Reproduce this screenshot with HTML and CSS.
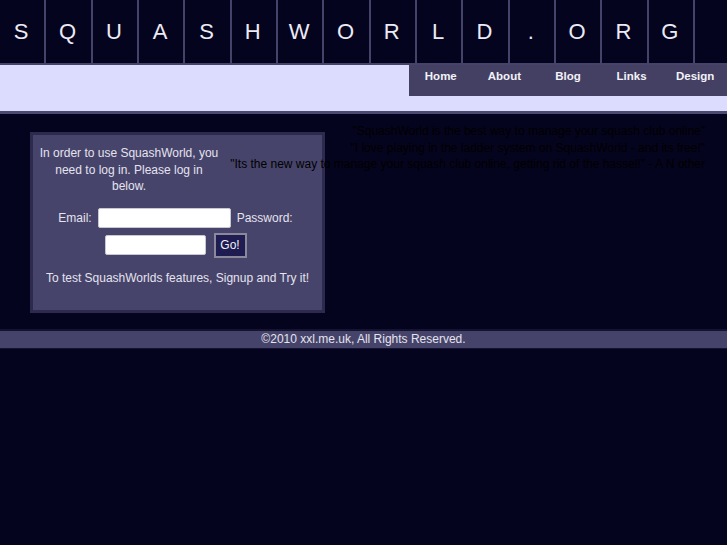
FILE: index.html
```html
<!DOCTYPE html>
<html>
<head>
<meta charset="utf-8">
<title>SquashWorld</title>
<link rel="stylesheet" href="styles.css">
</head>
<body>
<header class="logo">
  <div class="cell">S</div><div class="cell">Q</div><div class="cell">U</div><div class="cell">A</div><div class="cell">S</div><div class="cell">H</div><div class="cell">W</div><div class="cell">O</div><div class="cell">R</div><div class="cell">L</div><div class="cell">D</div><div class="cell">.</div><div class="cell">O</div><div class="cell">R</div><div class="cell">G</div>
</header>
<div class="strip">
  <nav class="nav">
    <a href="#">Home</a><a href="#">About</a><a href="#">Blog</a><a href="#">Links</a><a href="#">Design</a>
  </nav>
</div>
<main class="main">
  <div class="login">
    <p class="intro">In order to use SquashWorld, you need to log in. Please log in below.</p>
    <div class="row row1">
      <label>Email:</label><input class="field email" type="text"><label>Password:</label>
    </div>
    <div class="row row2">
      <input class="field pass" type="password"><button class="go">Go!</button>
    </div>
    <p class="signup">To test SquashWorlds features, Signup and Try it!</p>
  </div>
  <div class="quotes">
    <div>"SquashWorld is the best way to manage your squash club online"</div>
    <div>"I love playing in the ladder system on SquashWorld - and its free!"</div>
    <div>"Its the new way to manage your squash club online, getting rid of the hassel!" - A N other</div>
  </div>
</main>
<footer class="footer">©2010 xxl.me.uk, All Rights Reserved.</footer>
</body>
</html>
```
FILE: styles.css
```css
html, body {
  margin: 0;
  padding: 0;
  background: #05041e;
  font-family: "Liberation Sans", Arial, sans-serif;
  height: 100%;
}
.logo {
  display: grid;
  grid-template-columns: repeat(15, 46.33px);
  height: 63px;
  border-bottom: 2px solid #46436a;
  background: #05041e;
}
.cell {
  border-right: 2px solid #46436a;
  color: #ecebf5;
  font-size: 22px;
  text-align: center;
  line-height: 63px;
  padding-right: 2px;
}
.strip {
  height: 46px;
  background: #dcdcfe;
  border-bottom: 3px solid #4d4a72;
  display: flex;
  justify-content: flex-end;
  align-items: flex-start;
}
.nav {
  width: 318px;
  height: 31px;
  background: #444064;
  display: flex;
}
.nav a {
  flex: 1;
  text-align: center;
  color: #f2f2f8;
  text-decoration: none;
  font-weight: bold;
  font-size: 11.5px;
  line-height: 22px;
}
.main {
  display: grid;
  padding-bottom: 16px;
  border-bottom: 2px solid #15132f;
}
.login {
  grid-area: 1 / 1;
  justify-self: start;
  margin: 18px 0 0 30px;
  width: 289px;
  height: 175px;
  background: #47446b;
  border: 3px solid #2d2a4e;
  color: #e4e3ee;
  font-size: 12px;
}
.intro {
  margin: 10px 0 0 6px;
  width: 180px;
  text-align: center;
  line-height: 16.5px;
}
.row {
  display: flex;
  justify-content: center;
  align-items: center;
}
.row1 {
  margin-top: 13px;
  gap: 6px;
  padding-right: 4px;
}
.row2 {
  margin-top: 5px;
  gap: 8px;
  padding-right: 4px;
}
.field {
  box-sizing: border-box;
  height: 20px;
  background: #fff;
  border: 1px solid #c8c8d0;
  border-radius: 2px;
  padding: 0 3px;
  margin: 0;
}
.email { width: 133px; }
.pass { width: 101px; }
.go {
  box-sizing: border-box;
  width: 33px;
  height: 25px;
  background: #1f1c52;
  border: 2px solid #8a889a;
  color: #f0f0f8;
  font-family: "Liberation Sans", Arial, sans-serif;
  font-size: 12px;
  padding: 0;
}
.signup {
  margin: 12px 0 0 0;
  text-align: center;
  line-height: 16px;
}
.quotes {
  grid-area: 1 / 1;
  justify-self: end;
  align-self: start;
  margin: 9px 22px 0 0;
  z-index: 1;
  text-align: right;
  white-space: nowrap;
  color: #000;
  font-size: 12px;
  line-height: 16.5px;
}
.footer {
  height: 17px;
  background: #46436a;
  border-bottom: 1px solid #15132f;
  color: #e4e3ee;
  font-size: 12px;
  line-height: 17px;
  text-align: center;
}
```
